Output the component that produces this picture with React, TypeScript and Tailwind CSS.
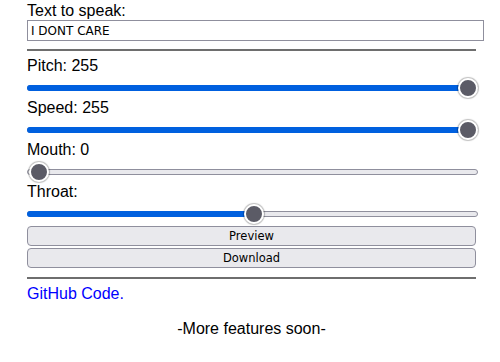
import { useState } from 'react'

const THUMB = 20

function Slider({ value, max = 255 }: { value: number; max?: number }) {
  const frac = value / max
  const center = 11.5 + frac * 429
  return (
    <div className="relative h-[24px] w-[451px] flex items-center">
      {/* track */}
      <div className="relative w-full h-[6px] rounded-full border border-[#8f8f9d] bg-[#e9e9ed] mt-[2px]">
        <div
          className="absolute left-[-1px] top-[-1px] bottom-[-1px] rounded-full bg-[#0060df]"
          style={{ width: value > 0 ? center + 1 : 0 }}
        />
      </div>
      {/* thumb */}
      <div
        className="absolute top-[3px] h-[20px] w-[20px] rounded-full bg-[#5b5b66] border-2 border-white shadow-[0_0_1px_1px_rgba(0,0,0,0.25)]"
        style={{ left: center - THUMB / 2 }}
      />
    </div>
  )
}

export default function App() {
  const [text, setText] = useState('I DONT CARE')

  const labelFont = { fontFamily: '"Liberation Sans", Arial, sans-serif' }

  return (
    <div className="bg-white w-[500px] h-[362px] overflow-hidden">
      <div className="pl-[27px] w-[476px] text-[16px] leading-[18px] text-black" style={labelFont}>
        <div className="pt-[2px] h-[20px]">Text to speak:</div>
        <input
          value={text}
          onChange={(e) => setText(e.target.value)}
          className="block h-[21px] w-[457px] border border-[#8f8f9d] pl-[3px] text-[12px] text-black outline-none"
          style={{ fontFamily: '"DejaVu Sans", Verdana, sans-serif' }}
        />
        <div className="mt-[8px] h-[2px] bg-[#6e6e6e]" />

        <div className="mt-[6px] h-[18px]">Pitch: 255</div>
        <Slider value={255} />
        <div className="h-[18px]">Speed: 255</div>
        <Slider value={255} />
        <div className="h-[18px]">Mouth: 0</div>
        <Slider value={0} />
        <div className="h-[18px]">Throat:</div>
        <Slider value={128} />

        <div className="mt-[1px] flex flex-col gap-[2px]" style={{ fontFamily: '"DejaVu Sans", Verdana, sans-serif' }}>
          <button className="h-[20px] w-full rounded-[4px] border border-[#8f8f9d] bg-[#e9e9ed] text-[11.5px] leading-[18px] text-black">
            Preview
          </button>
          <button className="h-[20px] w-full rounded-[4px] border border-[#8f8f9d] bg-[#e9e9ed] text-[11.5px] leading-[18px] text-black">
            Download
          </button>
        </div>

        <div className="mt-[9px] h-[2px] bg-[#6e6e6e]" />

        <div className="mt-[6px] h-[18px]">
          <a href="#" className="text-[#0000ff] no-underline">GitHub Code.</a>
        </div>

        <div className="mt-[17px] h-[18px] text-center">-More features soon-</div>
      </div>
    </div>
  )
}
